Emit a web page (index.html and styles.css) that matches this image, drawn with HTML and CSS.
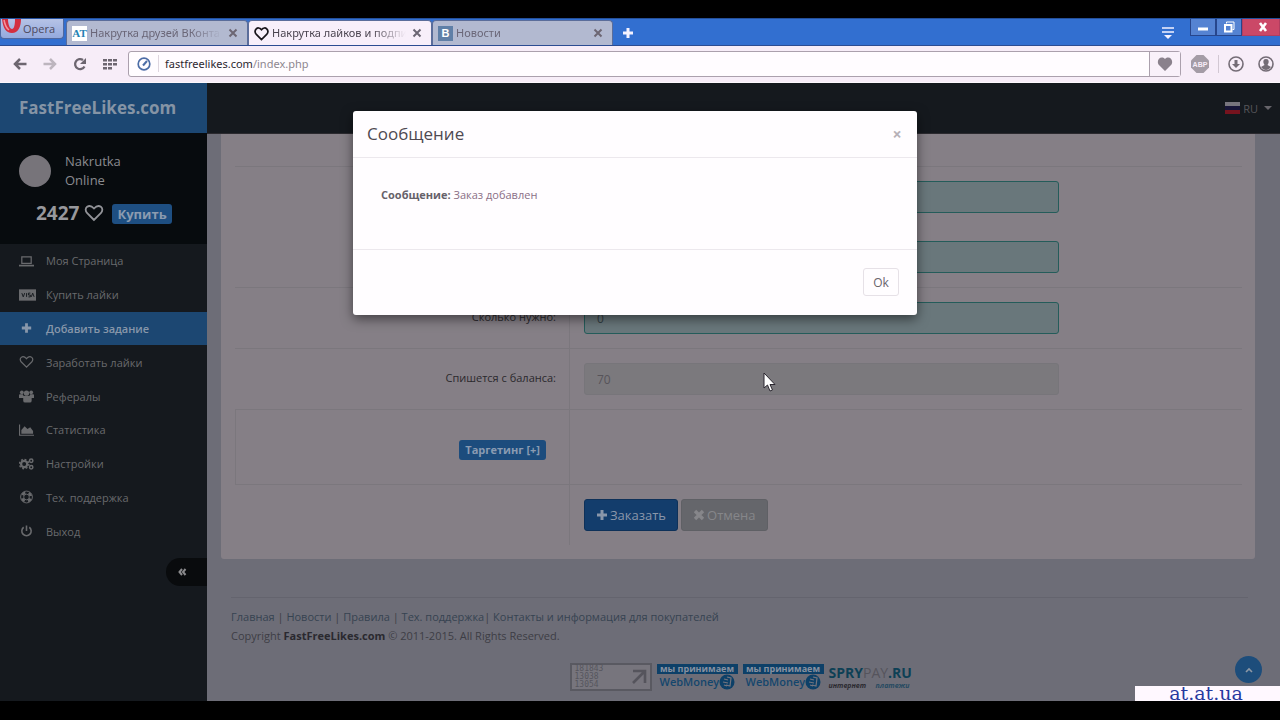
FILE: index.html
```html
<!DOCTYPE html>
<html lang="ru">
<head>
<meta charset="utf-8">
<title>Накрутка лайков и подписчиков</title>
<link rel="stylesheet" href="styles.css">
</head>
<body>
<div class="browser">
  <div class="tabstrip">
    <button class="opera"><svg class="opera-logo" viewBox="0 0 22 16" width="22" height="16"><path d="M1 0C2 9 5 14 11 14S20 8 20 0H14C14 6 13 10 11 10S7 6 7 0Z" fill="#d32f40"/><path d="M3 1c1 5 2 8 5 10" stroke="#f3949c" stroke-width="1.500" fill="none"/></svg>Opera</button>
    <div class="tabs">
      <div class="tab tab-first"><span class="fav fav-at">AT</span><span class="tab-title">Накрутка друзей ВКонта</span><button class="tab-close" aria-label="Закрыть вкладку"><svg viewBox="0 0 10 10" width="10" height="10"><path d="M1.500 1.500l7 7M8.500 1.500l-7 7"/></svg></button></div>
      <div class="tab tab-active"><svg class="fav" viewBox="0 0 16 16" width="16" height="16"><path d="M8 14.500L2.500 9C-1 5 4-1 8 4c4-5 9 1 5.500 5Z" fill="none" stroke="#19151b" stroke-width="1.800"/></svg><span class="tab-title">Накрутка лайков и подпи</span><button class="tab-close" aria-label="Закрыть вкладку"><svg viewBox="0 0 10 10" width="10" height="10"><path d="M1.500 1.500l7 7M8.500 1.500l-7 7"/></svg></button></div>
      <div class="tab tab-last"><span class="fav fav-vk">B</span><span class="tab-title">Новости</span><button class="tab-close" aria-label="Закрыть вкладку"><svg viewBox="0 0 10 10" width="10" height="10"><path d="M1.500 1.500l7 7M8.500 1.500l-7 7"/></svg></button></div>
    </div>
    <button class="newtab" aria-label="Новая вкладка"><svg viewBox="0 0 12 12" width="12" height="12"><path d="M6 1v10M1 6h10" stroke="#f4f2ff" stroke-width="3"/></svg></button>
    <button class="tabmenu" aria-label="Меню вкладок"><svg viewBox="0 0 14 12" width="14" height="12"><path d="M1 1h12M1 5h12" stroke="#f4f2ff" stroke-width="1.600"/><path d="M3 8h8l-4 4z" fill="#f4f2ff"/></svg></button>
    <div class="winbtns">
      <button class="win" aria-label="Свернуть"><svg viewBox="0 0 12 12" width="12" height="12"><path d="M1 8h10" stroke="#fff" stroke-width="3"/></svg></button>
      <button class="win" aria-label="Развернуть"><svg viewBox="0 0 12 12" width="12" height="12" fill="none" stroke="#fff"><path d="M3.500 2.500V1h7.500v7.500H9.500"/><path d="M2 4h6.500v6.500H2z" stroke-width="2"/></svg></button>
      <button class="win win-close" aria-label="Закрыть"><svg viewBox="0 0 12 12" width="12" height="12"><path d="M3 2l6 8M9 2l-6 8" stroke="#fff" stroke-width="2.600"/></svg></button>
    </div>
  </div>
  <div class="toolbar">
    <button class="tool" aria-label="Назад"><svg viewBox="0 0 14 12" width="14" height="12"><path d="M7 1L2 6l5 5M2 6h11.500" fill="none" stroke="#6d6670" stroke-width="2.500"/></svg></button>
    <button class="tool" aria-label="Вперёд"><svg viewBox="0 0 14 12" width="14" height="12"><path d="M7 1l5 5-5 5M12 6H.5" fill="none" stroke="#bdb5be" stroke-width="2.500"/></svg></button>
    <button class="tool" aria-label="Обновить"><svg viewBox="0 0 14 14" width="14" height="14"><path d="M11.500 9.500A5 5 0 1 1 10 3" fill="none" stroke="#6d6670" stroke-width="2.300"/><path d="M13 1v6H7z" fill="#6d6670"/></svg></button>
    <button class="tool" aria-label="Экспресс-панель"><svg viewBox="0 0 14 12" width="14" height="12" fill="#6d6670"><path d="M0 1h4v2.500H0zM5 1h4v2.500H5zM10 1h4v2.500h-4zM0 5h4v2.500H0zM5 5h4v2.500H5zM10 5h4v2.500h-4zM0 9h4v2.500H0zM5 9h4v2.500H5z"/></svg></button>
    <div class="address">
      <svg viewBox="0 0 14 14" width="14" height="14"><circle cx="7" cy="7" r="5.800" fill="none" stroke="#4c6ca6" stroke-width="1.700"/><path d="M6 8.500L10 4" stroke="#4c6ca6" stroke-width="2"/></svg>
      <span class="url">fastfreelikes.com<span class="url-path">/index.php</span></span>
      <button class="bookmark" aria-label="В закладки"><svg viewBox="0 0 16 14" width="16" height="14"><path d="M8 14L1.500 7.500C-1 3 4-2 8 2c4-4 9 1 6.500 5.500z" fill="#8a818c"/></svg></button>
    </div>
    <button class="ext abp" aria-label="Adblock Plus"><svg viewBox="0 0 18 18" width="18" height="18"><path d="M5.500 0h7L18 5.500v7L12.500 18h-7L0 12.500v-7z" fill="#a49ca6"/><text x="9" y="12" text-anchor="middle" class="abp-text">ABP</text></svg></button>
    <button class="ext" aria-label="Загрузки"><svg viewBox="0 0 16 16" width="16" height="16"><circle cx="8" cy="8" r="7" fill="none" stroke="#746c76" stroke-width="1.600"/><path d="M6.500 4h3v4H12l-4 4-4-4h2.500z" fill="#746c76"/></svg></button>
    <button class="ext ext-last" aria-label="Профиль"><svg viewBox="0 0 16 16" width="16" height="16"><circle cx="8" cy="8" r="7" fill="none" stroke="#746c76" stroke-width="1.600"/><path d="M8 3c2.500 0 3 2 2.500 4L9.500 9l3.500 2c-3 4-7 4-10 0l3.500-2-1-2C5 5 5.500 3 8 3z" fill="#746c76"/></svg></button>
  </div>
  <div class="page">
    <aside class="sidebar">
      <a class="brand" href="#">FastFreeLikes.com</a>
      <section class="user">
        <div class="profile"><span class="avatar"></span><span class="username">Nakrutka<br>Online</span></div>
        <div class="balance"><strong>2427</strong><svg viewBox="0 0 20 18" width="20" height="18"><path d="M10 16L3 9C-1 4 5-1 10 4.500 15-1 21 4 17 9z" fill="none" stroke="#929398" stroke-width="1.800"/></svg><a class="buy" href="#">Купить</a></div>
      </section>
      <nav class="menu">
        <a href="#"><svg viewBox="0 0 16 14"><path d="M3 2.500h10v7H3z" fill="none" stroke="currentColor" stroke-width="1.300"/><path d="M0 11h16v1.800H0z"/></svg>Моя Страница</a>
        <a href="#"><svg class="wide" viewBox="0 0 18 14"><path d="M0 1h18v12H0z"/><path d="M3 5l1.500 4L6 5M8 5v4M12 5h-2v2h2v2h-2M13 9l1.500-4L16 9" stroke="#15191e" fill="none"/></svg>Купить лайки</a>
        <a class="current" href="#"><svg viewBox="0 0 16 14"><path d="M6.500 2h3v3.500H13v3H9.500V12h-3V8.500H3v-3h3.500z"/></svg>Добавить задание</a>
        <a href="#"><svg viewBox="0 0 16 14"><path d="M8 12.500L2.500 7C-1 3 4-1 8 3.500 12-1 17 3 13.500 7z" fill="none" stroke="currentColor" stroke-width="1.300"/></svg>Заработать лайки</a>
        <a href="#"><svg viewBox="0 0 16 14"><circle cx="3" cy="3" r="2"/><circle cx="13" cy="3" r="2"/><circle cx="8" cy="4" r="2.800"/><path d="M0 9V6q0-1 1-1h3l1 2h6l1-2h3q1 0 1 1v3h-2.500v3q0 2-2 2h-5q-2 0-2-2V9z"/></svg>Рефералы</a>
        <a href="#"><svg viewBox="0 0 16 14"><path d="M0 1h1.200v11H16v1H0z"/><path d="M2.500 11V7L6 3l3 3 3-2 3 4v3z"/></svg>Статистика</a>
        <a href="#"><svg viewBox="0 0 16 14"><circle cx="5.500" cy="7" r="3.300" fill="none" stroke="currentColor" stroke-width="2.400"/><circle cx="5.500" cy="7" r="5" fill="none" stroke="currentColor" stroke-width="1.500" stroke-dasharray="2 1.900"/><circle cx="13" cy="3.500" r="1.800" fill="none" stroke="currentColor" stroke-width="1.600"/><circle cx="13" cy="10.500" r="1.800" fill="none" stroke="currentColor" stroke-width="1.600"/></svg>Настройки</a>
        <a href="#"><svg viewBox="0 0 16 14"><circle cx="8" cy="7" r="6.300" fill="none" stroke="currentColor"/><circle cx="8" cy="7" r="3" fill="none" stroke="currentColor"/><circle cx="8" cy="7" r="4.700" fill="none" stroke="currentColor" stroke-width="3" stroke-dasharray="3.690 3.690" stroke-dashoffset="-1.800"/></svg>Тех. поддержка</a>
        <a href="#"><svg viewBox="0 0 16 14"><path d="M5 3a5 5 0 1 0 6 0M8 1v6" fill="none" stroke="currentColor" stroke-width="1.700"/></svg>Выход</a>
      </nav>
      <button class="collapse" aria-label="Свернуть меню"><svg viewBox="0 0 10 10" width="10" height="10"><path d="M5 2L2.500 5 5 8M8.500 2L6 5l2.500 3" fill="none" stroke="#8a8a8c" stroke-width="2"/></svg></button>
    </aside>
    <div class="content">
      <header class="topbar"><button class="lang"><span class="flag"></span>RU<span class="caret"></span></button></header>
      <main class="main">
        <form class="panel">
          <div class="row row-top"><div class="label"></div><div class="field"></div></div>
          <div class="row row-double"><div class="label"></div><div class="field"><input class="input ok" type="text" aria-label="Ссылка"><input class="input ok" type="text" aria-label="Название"></div></div>
          <div class="row"><label class="label" for="count">Сколько нужно:</label><div class="field"><input class="input ok" id="count" type="text" value="0"></div></div>
          <div class="row"><label class="label" for="cost">Спишется с баланса:</label><div class="field"><input class="input" id="cost" type="text" value="70" disabled></div></div>
          <div class="row row-target"><div class="label"><button class="target" type="button">Таргетинг [+]</button></div><div class="field"></div></div>
          <div class="row row-actions"><div class="label"></div><div class="field actions"><button class="btn btn-order" type="button"><svg viewBox="0 0 12 12" width="12" height="12"><path d="M4.500 1h3v3.500H11v3H7.500V11h-3V7.500H1v-3h3.500z"/></svg>Заказать</button><button class="btn btn-cancel" type="button"><svg viewBox="0 0 12 12" width="12" height="12"><path d="M2 2l8 8M10 2l-8 8" stroke="currentColor" stroke-width="3.400"/></svg>Отмена</button></div></div>
        </form>
        <footer class="footer">
          <p><a href="#">Главная</a> | <a href="#">Новости</a> | <a href="#">Правила</a> | <a href="#">Тех. поддержка</a>| <a href="#">Контакты и информация для покупателей</a></p>
          <p>Copyright <strong>FastFreeLikes.com</strong> © 2011-2015. All Rights Reserved.</p>
          <div class="badges">
            <div class="counter"><span>181843<br>13038<br>13054</span><svg viewBox="0 0 16 16" width="16" height="16"><path d="M2 2h12v12M14 2L2 14" fill="none" stroke="#55545c" stroke-width="2.600"/></svg></div>
            <div class="wm"><span class="wm-top">мы принимаем</span><span class="wm-name">WebMoney<svg viewBox="0 0 16 16" width="16" height="16"><circle cx="8" cy="8" r="7.500" fill="#0d4068"/><path d="M8 3l4 1-1 8-4-1M5 5l4 1M4 8l5 1M5 11l3 1" fill="none" stroke="#74747e" stroke-width="1.200"/></svg></span></div>
            <div class="wm"><span class="wm-top">мы принимаем</span><span class="wm-name">WebMoney<svg viewBox="0 0 16 16" width="16" height="16"><circle cx="8" cy="8" r="7.500" fill="#0d4068"/><path d="M8 3l4 1-1 8-4-1M5 5l4 1M4 8l5 1M5 11l3 1" fill="none" stroke="#74747e" stroke-width="1.200"/></svg></span></div>
            <div class="spry"><span class="spry-name">SPRY<span class="spry-pay">PAY</span>.RU</span><span class="spry-sub"><span>интернет</span><span class="spry-blue">платежи</span></span></div>
          </div>
        </footer>
      </main>
    </div>
    <div class="overlay">
      <div class="modal" role="dialog" aria-labelledby="modal-title">
        <div class="modal-head"><h2 id="modal-title">Сообщение</h2><button class="modal-close" aria-label="Закрыть">×</button></div>
        <div class="modal-body"><strong>Сообщение:</strong> Заказ добавлен</div>
        <div class="modal-foot"><button class="modal-ok">Ok</button></div>
      </div>
    </div>
    <button class="totop" aria-label="Наверх"><svg viewBox="0 0 10 8" width="10" height="8"><path d="M2 6l3-3 3 3" fill="none" stroke="#8d98a5" stroke-width="1.600"/></svg></button>
    <svg class="cursor" viewBox="0 0 13 20" width="13" height="20"><path d="M1 1v15l3.500-3 2.500 6 2.500-1L7 12.500h5z" fill="#fff" stroke="#2b2730"/></svg>
    <div class="watermark">at.at.ua</div>
  </div>
</div>
</body>
</html>
```
FILE: styles.css
```css
* { box-sizing: border-box; }
body { margin: 0; background: #000; font: 11px/19px "Open Sans", sans-serif; }
button { font: inherit; color: inherit; background: none; border: 0; padding: 0; margin: 0; display: inline-flex; align-items: center; justify-content: center; }
a { color: inherit; text-decoration: none; }
p, h2 { margin: 0; }
svg { flex: none; }
.browser { display: flex; flex-direction: column; min-height: 100vh; padding: 18px 0 19px; }

.tabstrip { display: flex; height: 28px; background: #326fd0; border-top: 1px solid #24509c; border-bottom: 1px solid #2c4c92; }
.opera { align-self: flex-start; width: 64px; height: 20px; padding-right: 8px; justify-content: space-between; background: linear-gradient(#b6c3e6, #94aade); border: 1px solid #50689e; border-top: 0; border-radius: 0 0 4px 4px; color: #4d4a5e; }
.opera-logo { align-self: flex-start; }
.tabs { display: flex; padding: 1px 0 0 2px; }
.tab { display: flex; align-items: center; gap: 3px; width: 182px; padding: 0 9px 0 5px; background: #b2b9d0; border: 1px solid #5b6d9a; border-bottom: 0; border-radius: 4px 4px 0 0; color: #6a6677; font: 11px/16px "Noto Sans", sans-serif; }
.tab-active { width: 184px; background: #f8effa; color: #4b4450; }
.tab-last { width: 181px; }
.tab-title { flex: 1; overflow: hidden; white-space: nowrap; mask-image: linear-gradient(90deg, #000 75%, transparent); }
.fav { flex: none; width: 15px; height: 15px; }
.fav-at { background: #fff; color: #2482b4; font: bold 11px/15px "Liberation Serif", serif; text-align: center; }
.fav-vk { background: #5f7fa7; color: #fff; font: bold 11px/15px "Liberation Sans", sans-serif; text-align: center; }
.tab-close { margin-left: 3px; }
.tab-close path { stroke: #6c6673; stroke-width: 2; }
.newtab { width: 29px; padding-top: 2px; }
.tabmenu { margin-left: auto; width: 30px; padding-top: 2px; }
.winbtns { display: flex; height: 17px; margin-left: 7px; }
.win { width: 26px; background: #5583d2; border: 1px solid #27468c; border-top: 0; }
.win-close { width: 38px; background: #cb4867; padding-left: 4px; border-color: #b13e60; }

.toolbar { display: flex; align-items: center; height: 37px; padding: 0 0 1px 5px; background: #f7edf8; border-bottom: 1px solid #fcf8fd; }
.tool { width: 30px; height: 30px; }
.address { flex: 1; display: flex; align-items: center; height: 26px; margin-left: 3px; padding-left: 8px; background: #fffcff; border: 1px solid #aba0ad; border-radius: 3px; }
.url { flex: 1; margin-left: 7px; padding-left: 6px; color: #2d2730; border-left: 1px solid #ded6df; font: 11px/17px "Noto Sans", sans-serif; }
.url-path { color: #8e8790; }
.bookmark { width: 31px; height: 24px; border-left: 1px solid #aba0ad; background: #f9f1fa; }
.ext { width: 30px; height: 18px; }
.abp { width: 38px; border-right: 1px solid #d2c8d3; }
.abp-text { font: bold 7px "Liberation Sans", sans-serif; fill: #f7edf8; }
.ext-last { margin-right: -1px; }
.ext + .ext { margin-left: 2px; }
.ext + .ext-last { margin-left: 0; }

.page { position: relative; flex: 1; display: flex; background: #6d6d77; overflow: hidden; }
.sidebar { display: flex; flex-direction: column; width: 207px; background: #15191e; color: #696a6d; }
.brand { height: 50px; padding-left: 19px; background: #1c4772; color: #8594a5; font: bold 17px/50px "Open Sans", sans-serif; }
.user { height: 111px; padding: 19px 19px 0; background: #070b0e; color: #8b8c90; }
.profile { display: flex; align-items: center; gap: 14px; font-size: 13px; font-weight: 500; }
.avatar { width: 32px; height: 32px; border-radius: 50%; background: #77747a; }
.balance { display: flex; align-items: center; gap: 5px; height: 24px; margin: 11px 0 0 17px; font: 19px/24px "Open Sans", sans-serif; }
.balance strong { color: #97989c; }
.buy { height: 20px; margin: 2px 0 0 3px; padding: 0 5px; background: #1e4f82; border-radius: 3px; font: bold 13px/20px "Open Sans", sans-serif; color: #8b9bb0; }
.menu { display: flex; flex-direction: column; height: 304px; }
.menu a { flex: 1; display: flex; align-items: center; padding-left: 19px; gap: 12px; }
.menu svg { width: 15px; height: 14px; fill: currentColor; }
.menu svg.wide { width: 17px; margin-right: -2px; }
.menu .current { background: #1c4772; color: #8897aa; font-weight: 600; }
.collapse { align-self: flex-end; width: 41px; height: 28px; margin-top: 10px; padding-right: 10px; background: #090b0d; border-radius: 14px 0 0 14px; }

.content { flex: 1; display: flex; flex-direction: column; min-width: 0; }
.topbar { display: flex; justify-content: flex-end; height: 51px; padding-right: 8px; background: #15191e; color: #55555a; border-bottom: 1px solid #2b2a2f; }
.lang { gap: 3px; }
.flag { width: 15px; height: 12px; background: linear-gradient(#77757d 33%, #171538 33% 66%, #76131e 66%); }
.caret { margin-left: 3px; border: 4px solid transparent; border-top-color: #66646a; border-bottom: 0; }
.main { padding: 0 25px 0 14px; }
.panel { padding: 0 13px 14px 14px; background: #857f86; border-radius: 0 0 3px 3px; }
.row { display: flex; height: 60px; border-bottom: 1px solid #7b777d; box-sizing: content-box; }
.label { width: 335px; padding: 19px 13px 0 0; text-align: right; color: #2b292d; border-right: 1px solid #7b777d; }
.field { flex: 1; display: flex; flex-direction: column; gap: 28px; padding: 14px; }
.row-top { height: 32px; }
.row-double { height: 120px; }
.row-target { height: 74px; }
.row-target .label { padding: 30px 23px 0 0; border-left: 1px solid #7b777d; }
.row-actions { height: 60px; border-bottom: 0; }
.row-top .label { border-right: 0; }
.input { width: 100%; max-width: 475px; height: 32px; padding: 0 12px; background: #7b797d; color: #57545a; border: 1px solid #77757a; border-radius: 3px; font: 12px/20px "Open Sans", sans-serif; }
.input.ok { background: #69777b; color: #333e43; border-color: #245c5a; }
.target { height: 20px; padding: 0 6px; background: #1c4c7d; color: #8a9bb2; border-radius: 3px; font-weight: 700; line-height: 20px; }
.field.actions { flex-direction: row; gap: 3px; }
.btn { height: 32px; padding: 0 11px; gap: 2px; border: 1px solid #5f6065; border-radius: 3px; font-size: 13px; fill: currentColor; }
.btn-order { background: #133d6c; color: #8a97aa; border-color: #0e3159; }
.btn-cancel { background: #65666b; color: #86868a; }

.footer { margin: 38px 7px 0 10px; padding-top: 9px; border-top: 1px solid #64646e; color: #3d3d45; }
.footer a { color: #364351; }
.footer strong { color: #2a292f; }
.badges { display: flex; justify-content: center; align-items: center; gap: 5px; height: 28px; margin-top: 18px; }
.counter { display: flex; justify-content: space-between; align-items: center; width: 82px; height: 28px; padding: 0 3px; border: 2px solid #595961; background: #77757d; color: #56555d; font: 8px/8px "DejaVu Sans Mono", monospace; }
.wm { width: 81px; height: 27px; color: #14466d; }
.wm-top { display: block; height: 10px; background: #0d4068; color: #8791a0; font: bold 9px/9px "Open Sans", sans-serif; text-align: center; white-space: nowrap; }
.wm-name { display: flex; align-items: center; justify-content: space-between; height: 17px; padding: 0 3px; font: 600 11px/16px "Open Sans", sans-serif; }
.spry { width: 81px; height: 27px; }
.spry-name { display: block; color: #0d4055; font: bold 14px/17px "Open Sans", sans-serif; }
.spry-pay { color: #55545c; font-weight: 400; }
.spry-sub { display: flex; justify-content: space-between; color: #2b2a30; font: italic bold 7px/9px "Open Sans", sans-serif; }
.spry-blue { color: #264a61; }

.overlay { position: absolute; inset: 0; display: flex; justify-content: center; align-items: flex-start; padding: 28px 10px 0 0; }
.modal { width: 564px; background: #fffdff; border-radius: 3px; box-shadow: 0 4px 12px rgba(0, 0, 0, .5); color: #8a6f86; }
.modal-head { display: flex; justify-content: space-between; align-items: center; height: 47px; padding: 0 14px; border-bottom: 1px solid #ece8ed; }
.modal-head h2 { font: 17px/24px "Open Sans", sans-serif; color: #4f4a52; }
.modal-close { width: 12px; color: #b7b1b8; font: bold 16px/20px "Open Sans", sans-serif; }
.modal-body { min-height: 92px; padding: 27px 28px; border-bottom: 1px solid #ece8ed; }
.modal-body strong { color: #66616a; }
.modal-foot { display: flex; justify-content: flex-end; padding: 18px 18px 19px; }
.modal-ok { width: 36px; height: 28px; border: 1px solid #e6e1e7; border-radius: 3px; color: #69646c; font-size: 12px; }
.totop { position: absolute; right: 18px; bottom: 18px; width: 27px; height: 27px; border-radius: 50%; background: #1d4d7b; }
.cursor { position: absolute; left: 763px; top: 289px; }
.watermark { position: absolute; right: 0; bottom: 0; width: 145px; height: 15px; padding-right: 3px; background: #fff8ff; color: #27399f; text-align: center; font: 19px/14px "DejaVu Serif", serif; }
```
